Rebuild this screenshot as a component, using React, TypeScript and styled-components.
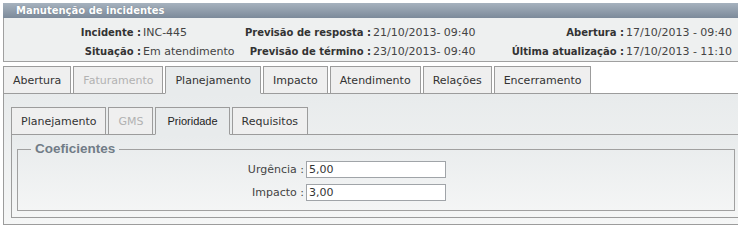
import React from 'react';
import styled, { createGlobalStyle, css } from 'styled-components';

const GlobalStyle = createGlobalStyle`
    html, body {
        margin: 0;
        padding: 0;
        background: #ffffff;
        overflow: hidden;
    }
    body {
        font-family: "DejaVu Sans", Verdana, sans-serif;
        font-size: 11px;
        color: #333;
    }
`;

const outerTabs = ['Abertura', 'Faturamento', 'Planejamento', 'Impacto', 'Atendimento', 'Relações', 'Encerramento'];
const innerTabs = ['Planejamento', 'GMS', 'Prioridade', 'Requisitos'];
const disabledTabs = ['Faturamento', 'GMS'];

const infoRows = [
    [
        ['Incidente :', 'INC-445'],
        ['Previsão de resposta :', '21/10/2013- 09:40'],
        ['Abertura :', '17/10/2013 - 09:40'],
    ],
    [
        ['Situação :', 'Em atendimento'],
        ['Previsão de término :', '23/10/2013- 09:40'],
        ['Última atualização :', '17/10/2013 - 11:10'],
    ],
];

const fields = [
    { label: 'Urgência :', value: '5,00' },
    { label: 'Impacto :', value: '3,00' },
];

const App: React.FC = () => {
    return (
        <>
        <GlobalStyle />
        <Page>
            <TitleBar>Manutenção de incidentes</TitleBar>
            <Info>
                {infoRows.map((row, i) => (
                    <React.Fragment key={i}>
                        {row.map(([label, value]) => (
                            <React.Fragment key={label}>
                                <InfoLabel>{label}</InfoLabel>
                                <InfoValue>{value}</InfoValue>
                            </React.Fragment>
                        ))}
                    </React.Fragment>
                ))}
            </Info>

            <TabBar $top={4}>
                {outerTabs.map(tab => (
                    <Tab
                    key={tab}
                    active={tab === 'Planejamento'}
                    disabled={disabledTabs.includes(tab)}>
                        {tab}
                    </Tab>
                ))}
            </TabBar>
            <Panel $pad="13px 7px 6px">
                <TabBar $top={0}>
                    {innerTabs.map(tab => (
                        <Tab
                        key={tab}
                        active={tab === 'Prioridade'}
                        narrow={tab === 'Prioridade'}
                        disabled={disabledTabs.includes(tab)}>
                            {tab}
                        </Tab>
                    ))}
                </TabBar>
                <Panel $pad="6px 5px 6px">
                    <FieldSet>
                        <Legend>Coeficientes</Legend>
                        <FormGrid>
                            {fields.map(f => (
                                <React.Fragment key={f.label}>
                                    <FieldLabel>{f.label}</FieldLabel>
                                    <Input defaultValue={f.value} />
                                </React.Fragment>
                            ))}
                        </FormGrid>
                    </FieldSet>
                </Panel>
            </Panel>
        </Page>
        </>
    )
}

const Page = styled.div`
    width: 746px;
    margin: 3px 0 0 3px;
`;

const TitleBar = styled.div`
    height: 15px;
    line-height: 15px;
    padding-left: 13px;
    background: linear-gradient(#a6b2be, #7c8a9a);
    color: #ffffff;
    font-size: 10px;
    font-weight: bold;
    text-shadow: 0 0 1px rgba(40, 50, 60, 0.4);
`;

const Info = styled.div`
    display: grid;
    grid-template-columns: 137px 97px 133px 119px 134px 1fr;
    grid-auto-rows: 19px;
    align-items: center;
    padding-top: 5px;
    background: #eef0f0;
    border-left: 1px solid #a0a0a0;
    border-bottom: 1px solid #a0a0a0;
    white-space: nowrap;
`;

const InfoLabel = styled.div`
    text-align: right;
    font-size: 10px;
    font-weight: bold;
    color: #333;
`;

const InfoValue = styled.div`
    padding-left: 2px;
    font-size: 11px;
    color: #444;
`;

const TabBar = styled.div<{ $top: number }>`
    display: flex;
    gap: 2px;
    height: 27px;
    margin-top: ${props => props.$top}px;
    border-bottom: 1px solid #9c9c9c;
`;

const Tab = styled.div<{ active?: boolean; disabled?: boolean; narrow?: boolean }>`
    box-sizing: border-box;
    height: 28px;
    margin-bottom: -1px;
    padding: 0 9px;
    display: flex;
    align-items: center;
    border: 1px solid #9c9c9c;
    background: #efefef;
    color: ${props => (props.disabled ? '#b2b2b2' : '#333')};
    white-space: nowrap;
    ${props =>
        props.active &&
        css`
            background: #e8ebec;
            border-bottom-color: #e8ebec;
        `
    }
    ${props =>
        props.narrow &&
        css`
            font-family: "Liberation Sans", Arial, sans-serif;
            color: #222;
            padding: 0 11px;
        `
    }
`;

const Panel = styled.div<{ $pad: string }>`
    padding: ${props => props.$pad};
    border: 1px solid #9c9c9c;
    border-top: none;
    background: linear-gradient(#e8ebec, #f5f6f6);
`;

const FieldSet = styled.fieldset`
    margin: 0;
    padding: 4px 0 9px;
    min-inline-size: 0;
    border: 1px solid #a0a0a0;
`;

const Legend = styled.legend`
    margin-left: 13px;
    padding: 0 4px;
    line-height: 16px;
    font-family: "Liberation Sans", Arial, sans-serif;
    font-size: 13.5px;
    font-weight: bold;
    color: #717c87;
`;

const FormGrid = styled.div`
    display: grid;
    grid-template-columns: 286px 140px;
    column-gap: 2px;
    row-gap: 6px;
    align-items: center;
`;

const FieldLabel = styled.label`
    text-align: right;
    color: #444;
`;

const Input = styled.input`
    box-sizing: border-box;
    width: 140px;
    height: 17px;
    padding: 0 2px;
    border: 1px solid #a0a4a8;
    background: #ffffff;
    font-family: "DejaVu Sans", Verdana, sans-serif;
    font-size: 11px;
    color: #333;
    outline: none;
`;

export default App;
